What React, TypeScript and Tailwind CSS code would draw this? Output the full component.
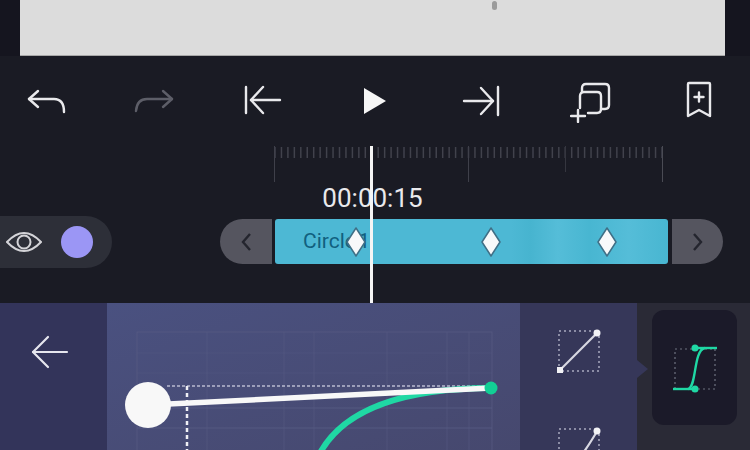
import React from 'react';

const ticks = Array.from({ length: 61 }, (_, i) => 275 + i * 6.45);

const Ruler = () => (
  <svg width="750" height="36" className="block">
    {ticks.map((x) => (
      <line key={x} x1={x} x2={x} y1="1" y2="12" stroke="#41424c" strokeWidth="1.5" />
    ))}
    <line x1="274.5" x2="274.5" y1="0" y2="36" stroke="#3f404a" />
    <line x1="468.5" x2="468.5" y1="0" y2="36" stroke="#3f404a" />
    <line x1="565.5" x2="565.5" y1="0" y2="26" stroke="#35363f" />
    <line x1="662.5" x2="662.5" y1="0" y2="36" stroke="#4a4b54" />
  </svg>
);

const Diamond = ({ className }: { className: string }) => (
  <svg width="22" height="32" viewBox="0 0 22 32" className={className}>
    <path d="M11 2 L20 16 L11 30 L2 16 Z" fill="#f7f9fa" stroke="#3f6f86" strokeWidth="1.5" strokeLinejoin="round" />
  </svg>
);

const PresetIcon = ({ d }: { d: string }) => (
  <svg width="44" height="44" viewBox="0 0 44 44" className="shrink-0">
    <rect x="2" y="2" width="40" height="40" fill="none" stroke="#a9aabf" strokeWidth="1.5" strokeDasharray="2 3" />
    <path d={d} fill="none" stroke="#d8d8e2" strokeWidth="2.2" />
    <circle cx="40" cy="4" r="3.5" fill="#f2f2f5" />
    <rect x="0" y="38" width="6" height="6" fill="#f2f2f5" />
  </svg>
);

export default function App() {
  return (
    <div className="relative w-[750px] h-[450px] overflow-hidden bg-[#1a1b24] font-['Roboto',sans-serif]">
      {/* preview */}
      <div className="flex h-[56px] bg-[#15151f]">
        <div className="w-5" />
        <div className="w-[705px] bg-[#dcdcdc] border-b border-[#a8a8a8] pl-[472px]">
          <div className="mt-[1px] w-[5px] h-[9px] rounded-full bg-[#9b9b9b]" />
        </div>
      </div>

      {/* toolbar */}
      <div className="flex items-center h-[90px] pl-[27px] text-[#e9e9ec]">
        <svg width="40" height="32" viewBox="0 0 40 32" fill="none" stroke="currentColor" strokeWidth="2.4" strokeLinecap="round" strokeLinejoin="round">
          <path d="M11 6 L2 14 L11 22" />
          <path d="M2 14 H27 Q37 14 37 27" />
        </svg>
        <svg width="40" height="32" viewBox="0 0 40 32" fill="none" stroke="#5d5e68" strokeWidth="2.4" strokeLinecap="round" strokeLinejoin="round" className="ml-[67px]">
          <path d="M29 6 L38 14 L29 22" />
          <path d="M38 14 H13 Q3 14 2 26" />
        </svg>
        <svg width="38" height="32" viewBox="0 0 38 32" fill="none" stroke="currentColor" strokeWidth="2.4" strokeLinecap="round" strokeLinejoin="round" className="ml-[70px]">
          <path d="M2 2 V28" />
          <path d="M19 2 L7 15 L19 28" />
          <path d="M7 15 H36" />
        </svg>
        <svg width="24" height="28" viewBox="0 0 24 28" className="ml-[81px]">
          <path d="M1 1 L23 14 L1 27 Z" fill="#f6f6f6" />
        </svg>
        <svg width="38" height="32" viewBox="0 0 38 32" fill="none" stroke="currentColor" strokeWidth="2.4" strokeLinecap="round" strokeLinejoin="round" className="ml-[75px]">
          <path d="M36 2 V30" />
          <path d="M19 3 L31 16 L19 29" />
          <path d="M2 16 H31" />
        </svg>
        <svg width="42" height="42" viewBox="0 0 42 42" fill="none" stroke="currentColor" strokeWidth="2.4" strokeLinecap="round" strokeLinejoin="round" className="ml-[70px] mt-[2px]">
          <path d="M12 11 V7 Q12 3 16 3 H35 Q39 3 39 7 V24 Q39 28 35 28 H31" />
          <path d="M10 27 V15 Q10 11 14 11 H27 Q31 11 31 15 V28 Q31 32 27 32 H18" />
          <path d="M1 35 H15 M8 29 V41" />
        </svg>
        <svg width="28" height="38" viewBox="0 0 28 38" fill="none" stroke="currentColor" strokeWidth="2.4" strokeLinecap="round" strokeLinejoin="round" className="ml-[73px] mt-[-3px]">
          <path d="M3 3 Q3 2 4 2 H24 Q25 2 25 3 V35 L14 29 L3 35 Z" />
          <path d="M9.5 16 H18.5 M14 11.5 V20.5" />
        </svg>
      </div>

      {/* ruler + timecode */}
      <Ruler />
      <div className="h-[34px] -mt-[1px] flex items-center justify-center pr-[5px] text-[26px] leading-none text-[#e9e9ec]">00:00:15</div>

      {/* track row */}
      <div className="flex items-center h-[87px] pb-[34px] mt-[1px]">
        <div className="flex items-center w-[112px] h-[52px] -mt-[2px] rounded-r-full bg-[#2d2f38] pl-[6px]">
          <svg width="36" height="26" viewBox="0 0 36 26" fill="none" stroke="#d4d4d8" strokeWidth="2">
            <path d="M1 13 Q18 -5 35 13 Q18 31 1 13 Z" />
            <circle cx="18" cy="13" r="6.5" />
          </svg>
          <div className="ml-[19px] w-8 h-8 rounded-full bg-[#9b96f5]" />
        </div>
        <div className="ml-[108px] -mt-[2px] flex items-center justify-center w-[52px] h-[45px] rounded-l-full bg-[#55555f]">
          <svg width="12" height="20" viewBox="0 0 12 20" fill="none" stroke="#24252e" strokeWidth="2.4"><path d="M10 2 L3 10 L10 18" /></svg>
        </div>
        <div className="relative ml-[3px] -mt-[2px] w-[393px] h-[45px] rounded-[3px] bg-[linear-gradient(90deg,#4db8d4_0%,#4db8d4_60%,#47b4cf_65%,#55bdd8_72%,#48b6d1_80%,#55bdd8_90%,#48b6d1_100%)] pl-[28px] flex items-center text-[21px] [word-spacing:-3px] text-[#11607f]">
          Circle 1
          <Diamond className="absolute left-[70px] top-[7px]" />
          <Diamond className="absolute left-[205px] top-[7px]" />
          <Diamond className="absolute left-[321px] top-[7px]" />
        </div>
        <div className="ml-[4px] -mt-[2px] flex items-center justify-center w-[51px] h-[45px] rounded-r-full bg-[#55555f]">
          <svg width="12" height="20" viewBox="0 0 12 20" fill="none" stroke="#24252e" strokeWidth="2.4"><path d="M2 2 L9 10 L2 18" /></svg>
        </div>
      </div>

      {/* easing panel */}
      <div className="flex h-[147px]">
        <div className="flex justify-center w-[107px] bg-[#33345a] pt-[32px] pr-[8px]">
          <svg width="38" height="34" viewBox="0 0 38 34" fill="none" stroke="#e6e6ee" strokeWidth="2.2" strokeLinecap="round" strokeLinejoin="round">
            <path d="M17 2 L2 17 L17 32" />
            <path d="M2 17 H36" />
          </svg>
        </div>
        <div className="w-[413px] bg-gradient-to-br from-[#4a5180] to-[#46486e]">
          <svg width="413" height="147" viewBox="0 0 413 147">
            <g stroke="#595d84" strokeWidth="1" fill="none">
              <rect x="30" y="29" width="355" height="135" opacity="0.7" />
              <path d="M30 50 H385 M30 70 H385" opacity="0.3" />
              <path d="M30 105 H385 M30 125 H385" opacity="0.8" />
              <path d="M100 29 V164 M177 29 V164 M207 29 V164 M280 29 V164 M340 29 V164 M362 29 V164" opacity="0.5" />
            </g>
            <path d="M60 83 H384" stroke="#b9bbd0" strokeWidth="1.5" strokeDasharray="3 2" />
            <path d="M80 83 V147" stroke="#f0f0f5" strokeWidth="2.5" strokeDasharray="4 3" />
            <path d="M213 150 Q248 86 384 85" fill="none" stroke="#1fd8a4" strokeWidth="6" />
            <path d="M41 102 L384 85" stroke="#f8f8f8" strokeWidth="5.5" />
            <circle cx="41" cy="102" r="23" fill="#f8f8f8" />
            <circle cx="384" cy="85" r="6.5" fill="#12cf95" />
          </svg>
        </div>
        <div className="relative flex flex-col items-center w-[117px] pt-[26px] gap-[54px] bg-[#363759]">
          <PresetIcon d="M3 41 L41 3" />
          <PresetIcon d="M3 41 C20 41 30 20 41 3" />
          <div className="absolute -right-[11px] top-[57px] w-0 h-0 border-y-[9px] border-y-transparent border-l-[11px] border-l-[#363759]" />
        </div>
        <div className="flex-1 bg-[#2a2a36] pl-[15px] pt-[7px]">
          <div className="flex items-center justify-center w-[85px] h-[115px] rounded-xl bg-[#1b1a29]">
            <svg width="46" height="50" viewBox="0 0 46 50" fill="none">
              <rect x="3" y="6" width="40" height="40" stroke="#6f7280" strokeWidth="1.2" strokeDasharray="2 3" />
              <path d="M1 46 H24" stroke="#1fd8a4" strokeWidth="2.4" />
              <path d="M22 5 H45" stroke="#1fd8a4" strokeWidth="2.4" />
              <path d="M16 46 C25 44 21 7 33 5" stroke="#1fd8a4" strokeWidth="2.4" />
              <circle cx="23" cy="5" r="3.5" fill="#1fd8a4" />
              <circle cx="23" cy="46" r="3.5" fill="#1fd8a4" />
            </svg>
          </div>
        </div>
      </div>

      {/* playhead */}
      <div className="absolute left-[370px] top-[146px] w-[3px] h-[157px] bg-[#f5f5f5]" />
    </div>
  );
}
